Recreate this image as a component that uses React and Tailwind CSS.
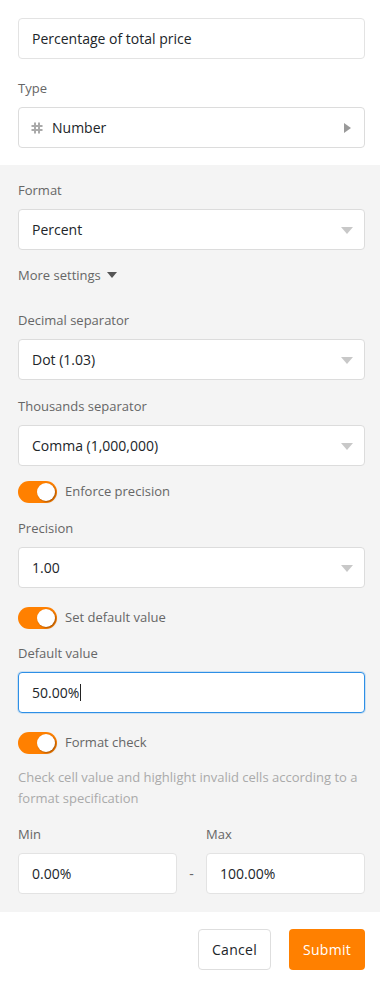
import { useState } from "react";

function Caret({ right }) {
  return (
    <svg width="12" height="10" viewBox="0 0 12 10" className="shrink-0">
      {right ? (
        <path d="M3 0 L10 5 L3 10 Z" fill="#9a9a9a" />
      ) : (
        <path d="M0 2 L12 2 L6 9 Z" fill="#c8c8c8" />
      )}
    </svg>
  );
}

function Select({ value, icon, right }) {
  return (
    <div className="flex items-center h-[41px] bg-white border border-[#dcdcdc] rounded-[4px] pl-[13px] pr-[11px]">
      {icon}
      <span className="flex-1 text-[14px] text-[#212529]">{value}</span>
      <Caret right={right} />
    </div>
  );
}

function Label({ children, className = "" }) {
  return <div className={`text-[13px] text-[#666] leading-[18px] ${className}`}>{children}</div>;
}

function Toggle({ label }) {
  const [on, setOn] = useState(true);
  return (
    <div className="flex items-center gap-[8px] h-[22px]" onClick={() => setOn(!on)}>
      <div className={`relative w-[39px] h-[22px] rounded-full ${on ? "bg-[#ff8000]" : "bg-[#ccc]"}`}>
        <div
          className={`absolute top-[2px] w-[18px] h-[18px] rounded-full bg-white shadow-[1px_1px_2px_rgba(0,0,0,0.35)] ${
            on ? "left-[19px]" : "left-[2px]"
          }`}
        />
      </div>
      <span className="text-[13px] text-[#666]">{label}</span>
    </div>
  );
}

function HashIcon() {
  return (
    <svg width="12" height="12" viewBox="0 0 12 12" className="shrink-0 mr-[9px] -ml-[1px]">
      <path d="M4 0.5 V11.5 M8 0.5 V11.5 M0.5 4 H11.5 M0.5 8 H11.5" stroke="#aaa" strokeWidth="2" />
    </svg>
  );
}

export default function App() {
  return (
    <div className="w-[380px] bg-white font-['Open_Sans',sans-serif]">
      {/* top */}
      <div className="pl-[18px] pr-[15px] pt-[18px] pb-[17px]">
        <div className="flex items-center h-[41px] border border-[#e3e3e3] rounded-[4px] px-[13px] text-[14px] text-[#212529]">
          Percentage of total price
        </div>
        <Label className="mt-[20px]">Type</Label>
        <div className="mt-[10px]">
          <Select value="Number" right icon={<HashIcon />} />
        </div>
      </div>

      {/* gray settings */}
      <div className="bg-[#f4f4f4] pl-[18px] pr-[15px] pt-[16px] pb-[18px]">
        <Label>Format</Label>
        <div className="mt-[10px]">
          <Select value="Percent" />
        </div>
        <div className="mt-[16px] flex items-center gap-[6px] text-[13px] text-[#666] leading-[18px]">
          More settings
          <svg width="10" height="8" viewBox="0 0 10 8">
            <path d="M0 1 L10 1 L5 7 Z" fill="#555" />
          </svg>
        </div>

        <Label className="mt-[27px]">Decimal separator</Label>
        <div className="mt-[10px]">
          <Select value="Dot (1.03)" />
        </div>

        <Label className="mt-[17px]">Thousands separator</Label>
        <div className="mt-[10px]">
          <Select value="Comma (1,000,000)" />
        </div>

        <div className="mt-[15px]">
          <Toggle label="Enforce precision" />
        </div>

        <Label className="mt-[16px]">Precision</Label>
        <div className="mt-[10px]">
          <Select value="1.00" />
        </div>

        <div className="mt-[19px]">
          <Toggle label="Set default value" />
        </div>

        <Label className="mt-[15px]">Default value</Label>
        <div className="mt-[10px] flex items-center h-[41px] bg-white border border-[#2d8fe6] rounded-[4px] px-[13px] text-[14px] text-[#212529] shadow-[0_0_0_1px_rgba(45,143,230,0.2)]">
          50.00%<span className="w-px h-[17px] bg-[#222] ml-px" />
        </div>

        <div className="mt-[19px]">
          <Toggle label="Format check" />
        </div>

        <div className="mt-[13px] text-[13px] text-[#aaa] leading-[21px]">
          Check cell value and highlight invalid cells according to a format specification
        </div>

        <div className="mt-[16px] grid grid-cols-[1fr_29px_1fr] items-end">
          <div>
            <Label>Min</Label>
            <div className="mt-[10px] flex items-center h-[41px] bg-white border border-[#e3e3e3] rounded-[4px] px-[13px] text-[14px] text-[#212529]">
              0.00%
            </div>
          </div>
          <div className="h-[41px] flex items-center justify-center text-[14px] text-[#666]">-</div>
          <div>
            <Label>Max</Label>
            <div className="mt-[10px] flex items-center h-[41px] bg-white border border-[#e3e3e3] rounded-[4px] px-[13px] text-[14px] text-[#212529]">
              100.00%
            </div>
          </div>
        </div>
      </div>

      {/* footer */}
      <div className="flex justify-end gap-[18px] px-[15px] pt-[17px] pb-[15px]">
        <button className="h-[41px] w-[73px] bg-white border border-[#dedede] rounded-[4px] text-[14px] text-[#212529] tracking-[0.3px]">
          Cancel
        </button>
        <button className="h-[41px] w-[76px] bg-[#ff8000] rounded-[4px] text-[14px] text-white tracking-[0.3px]">
          Submit
        </button>
      </div>
    </div>
  );
}
